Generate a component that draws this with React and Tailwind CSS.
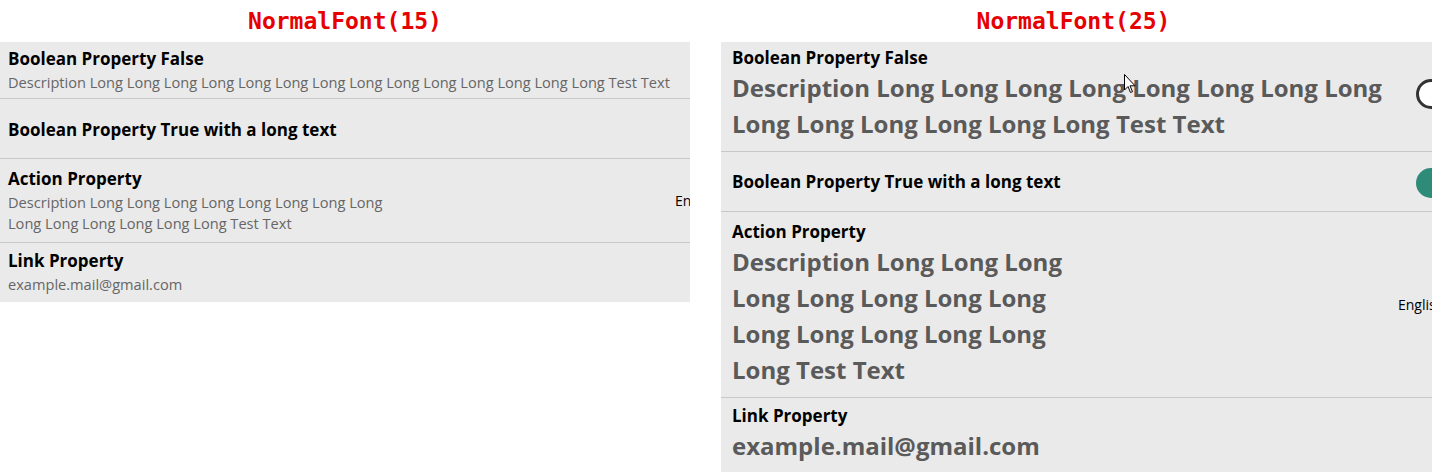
const ui = { fontFamily: '"Open Sans", "Noto Sans", sans-serif' };

function Toggle({ on }) {
  if (on) {
    return <div className="w-[60px] h-[30px] rounded-full bg-[#2e8b78] shrink-0" />;
  }
  return <div className="w-[60px] h-[30px] rounded-full border-[3px] border-[#333333] bg-white shrink-0" />;
}

function Title({ children, big }) {
  return (
    <div
      className={`text-[17px] leading-[22px] font-bold text-black whitespace-nowrap ${big ? 'mb-[1px]' : 'mb-[2px]'}`}
    >
      {children}
    </div>
  );
}

function Desc({ lines, big }) {
  return (
    <div
      className={
        big
          ? 'text-[24px] leading-[36px] font-bold text-[#5a5a5a] whitespace-nowrap'
          : 'text-[14.6px] leading-[21px] text-[#666666] whitespace-nowrap'
      }
    >
      {lines.map((l) => (
        <div key={l}>{l}</div>
      ))}
    </div>
  );
}

function Panel({ big, width, toggleX, actionX, rows }) {
  const rowCls = 'flex items-center border-b border-[#c8c8c8]';
  const row1 = big
    ? ['Description Long Long Long Long Long Long Long Long', 'Long Long Long Long Long Long Test Text']
    : ['Description Long Long Long Long Long Long Long Long Long Long Long Long Long Long Test Text'];
  const action = big
    ? ['Description Long Long Long', 'Long Long Long Long Long', 'Long Long Long Long Long', 'Long Test Text']
    : ['Description Long Long Long Long Long Long Long Long', 'Long Long Long Long Long Long Test Text'];
  const pl = big ? 'pl-[11px]' : 'pl-[8px]';
  return (
    <div className={`bg-[#eaeaea] overflow-hidden ${width}`} style={ui}>
      <div className="w-[900px]">
        <div className={`${rowCls} ${pl} ${rows[0]}`}>
          <div className={`${toggleX} shrink-0`}>
            <Title big={big}>Boolean Property False</Title>
            <Desc lines={row1} big={big} />
          </div>
          <Toggle on={false} />
        </div>
        <div className={`${rowCls} ${pl} ${rows[1]}`}>
          <div className={`${toggleX} shrink-0`}>
            <Title big={big}>Boolean Property True with a long text</Title>
          </div>
          <Toggle on />
        </div>
        <div className={`${rowCls} ${pl} ${rows[2]}`}>
          <div className={`${actionX} shrink-0`}>
            <Title big={big}>Action Property</Title>
            <Desc lines={action} big={big} />
          </div>
          <div className="text-[14px] text-black whitespace-nowrap">English</div>
        </div>
        <div className={`flex ${pl} ${rows[3]}`}>
          <div>
            <Title big={big}>Link Property</Title>
            <Desc lines={['example.mail@gmail.com']} big={big} />
          </div>
        </div>
      </div>
    </div>
  );
}

function Heading({ children }) {
  return (
    <div
      className="h-[42px] flex items-center justify-center text-[23px] font-bold text-[#e60000]"
      style={{ fontFamily: '"DejaVu Sans Mono", monospace' }}
    >
      {children}
    </div>
  );
}

export default function App() {
  return (
    <div className="w-[1432px] h-[472px] overflow-hidden bg-white relative flex">
      <div className="w-[690px] shrink-0">
        <Heading>NormalFont(15)</Heading>
        <Panel
          big={false}
          width="w-[690px]"
          toggleX="w-[685px]"
          actionX="w-[667px]"
          rows={['h-[57px]', 'h-[60px] pt-[4px]', 'h-[84px]', 'h-[59px] items-center']}
        />
      </div>
      <div className="w-[711px] shrink-0 ml-[31px]">
        <div className="pr-[6px]">
          <Heading>NormalFont(25)</Heading>
        </div>
        <Panel
          big
          width="w-[711px]"
          toggleX="w-[684px]"
          actionX="w-[666px]"
          rows={['h-[110px] pb-[5px]', 'h-[60px] pt-[2px]', 'h-[186px]', 'h-[80px] items-start pt-[7px]']}
        />
      </div>
      <svg className="absolute left-[1124px] top-[74px]" width="12" height="20" viewBox="0 0 12 20">
        <path d="M0.5 0.5 L0.5 16 L4 12.5 L6.5 18.5 L8.5 17.7 L6 11.8 L11 11.8 Z" fill="#ffffff" stroke="#000000" strokeWidth="1" />
      </svg>
    </div>
  );
}
